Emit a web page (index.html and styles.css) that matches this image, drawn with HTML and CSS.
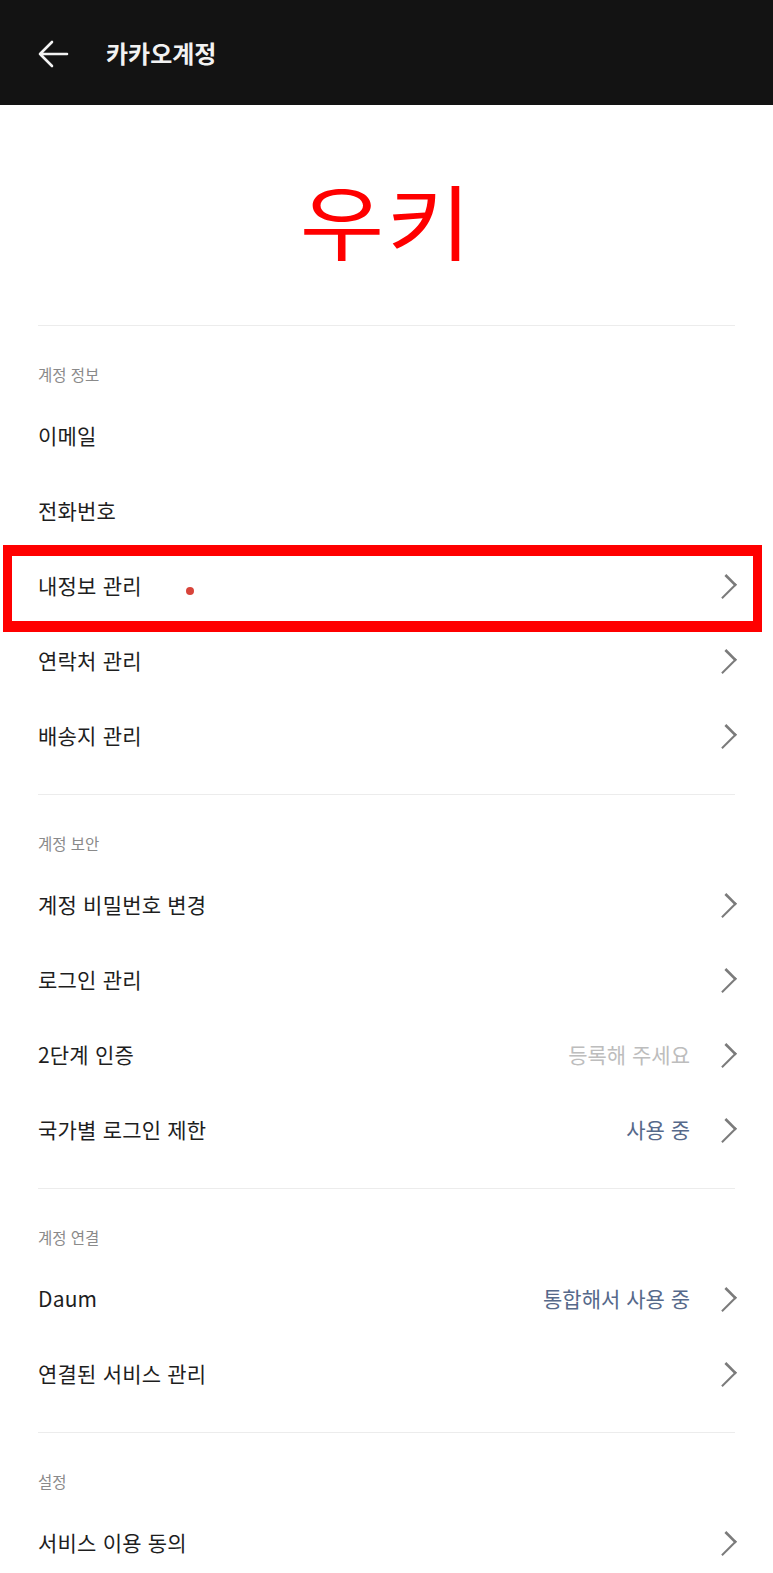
FILE: index.html
```html
<!DOCTYPE html>
<html lang="ko">
<head>
  <meta charset="UTF-8">
  <title>카카오계정</title>
  <link rel="stylesheet" href="styles.css">
</head>
<body>
  <div class="topbar">
    <svg class="back" width="32" height="28" viewBox="0 0 32 28"><path d="M30 14H3M15 2L3 14l12 12" fill="none" stroke="#f2f2f2" stroke-width="2.6" stroke-linecap="round" stroke-linejoin="round"/></svg>
    <span class="title">카카오계정</span>
  </div>

  <div class="name"><span>우키</span></div>

  <div class="wrapper">
    <div class="section">
      <div class="label">계정 정보</div>
      <div class="row"><span>이메일</span></div>
      <div class="row"><span>전화번호</span></div>
      <div class="row marked"><span>내정보 관리</span><i class="chev"></i>
        <div class="mark"></div><div class="dot"></div>
      </div>
      <div class="row"><span>연락처 관리</span><i class="chev"></i></div>
      <div class="row"><span>배송지 관리</span><i class="chev"></i></div>
    </div>

    <div class="section">
      <div class="label">계정 보안</div>
      <div class="row"><span>계정 비밀번호 변경</span><i class="chev"></i></div>
      <div class="row"><span>로그인 관리</span><i class="chev"></i></div>
      <div class="row"><span>2단계 인증</span><em class="val muted">등록해 주세요</em><i class="chev"></i></div>
      <div class="row"><span>국가별 로그인 제한</span><em class="val">사용 중</em><i class="chev"></i></div>
    </div>

    <div class="section">
      <div class="label">계정 연결</div>
      <div class="row"><span>Daum</span><em class="val">통합해서 사용 중</em><i class="chev"></i></div>
      <div class="row"><span>연결된 서비스 관리</span><i class="chev"></i></div>
    </div>

    <div class="section">
      <div class="label">설정</div>
      <div class="row"><span>서비스 이용 동의</span><i class="chev"></i></div>
    </div>
  </div>
</body>
</html>
```

FILE: styles.css
```css
body { margin: 0; background: #fff; color: #1e1e1e; font-family: "Noto Sans CJK KR", "Noto Sans", sans-serif; }

.topbar { display: flex; align-items: center; height: 105px; background: #131313; padding-left: 37px; }
.back { display: block; margin-top: 2px; }
.title { margin-left: 37px; color: #f2f2f2; font-size: 24px; font-weight: 700; }

.name { text-align: center; color: #f00; font-size: 82px; line-height: 80px; font-weight: 400; padding: 74px 0 66px; }
.name span { display: inline-block; transform: scaleX(1.12); letter-spacing: 2px; }

.wrapper { padding: 0 38px; }
.section { border-top: 1px solid #ececec; padding-bottom: 20px; }
.label { padding: 38px 0 15px; font-size: 15.5px; line-height: 20px; color: #8a8a8a; }

.row { position: relative; display: flex; align-items: center; height: 75px; font-size: 21px; letter-spacing: 0.2px; }
.row span { flex: 1; margin-top: -3px; }
.val { font-style: normal; color: #56698a; margin: -3px 27px 0 0; letter-spacing: 0; }
.val.muted { color: #bdbdbd; }
.chev { width: 13px; height: 13px; border-top: 2.4px solid #7b7b7b; border-right: 2.4px solid #7b7b7b; transform: rotate(45deg) scaleY(1.35); margin-right: 3px; }

/* annotation drawn over the screenshot */
.mark { position: absolute; left: -35px; right: -27px; top: -4px; bottom: -8px; border-style: solid; border-color: #f00; border-width: 11px 9px 11px 9px; }
.dot { position: absolute; left: 148px; top: 38px; width: 8px; height: 8px; border-radius: 50%; background: #d8443a; }
```
